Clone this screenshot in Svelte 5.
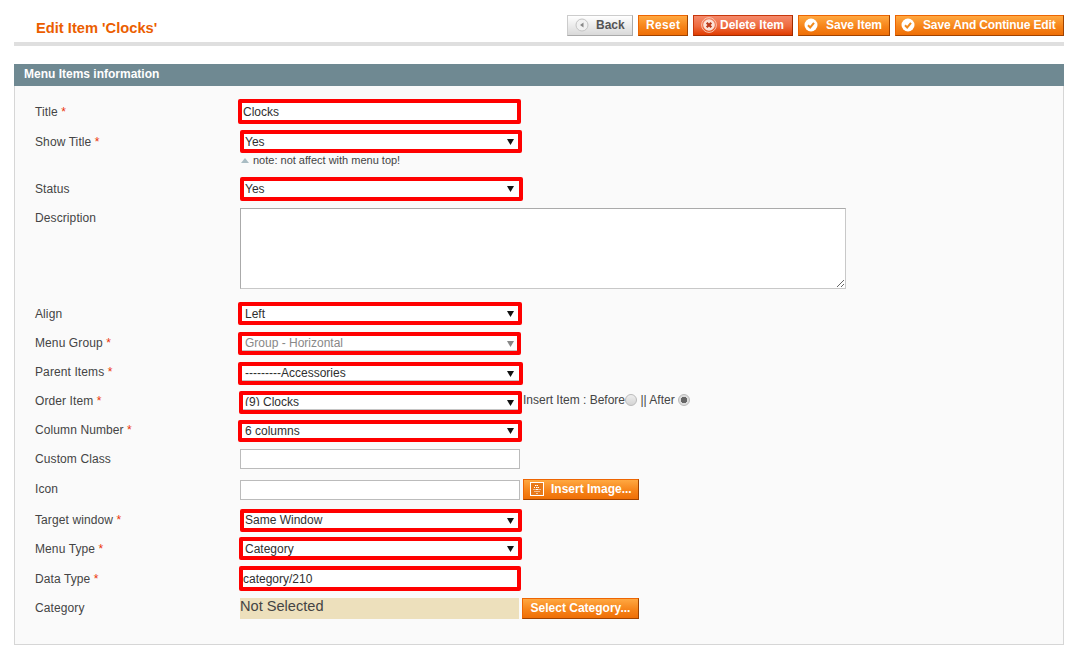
<script>
  // dy = control top relative to the row, dx = control left relative to the column
  // up = extra bottom padding that lifts a select's text off the box centre
  const rows = [
    { label: 'Title', req: true, kind: 'text', value: 'Clocks', h: 30, dy: -2, dx: -2, w: 283, bh: 25 },
    { label: 'Show Title', req: true, kind: 'select', value: 'Yes', note: 'note: not affect with menu top!', h: 47, dy: -1, dx: 0, w: 282, bh: 23 },
    { label: 'Status', kind: 'select', value: 'Yes', h: 29, dy: -1, dx: 0, w: 283, bh: 24 },
    { label: 'Description', kind: 'area', h: 96, dy: 1 },
    { label: 'Align', kind: 'select', value: 'Left', h: 29, dy: -1, dx: -2, w: 284, bh: 23 },
    { label: 'Menu Group', req: true, kind: 'select', value: 'Group - Horizontal', off: true, seam: true, up: 2, h: 29, dy: 0, dx: -2, w: 283, bh: 23 },
    { label: 'Parent Items', req: true, kind: 'select', value: '---------Accessories', seam: true, up: 4, h: 29, dy: 1, dx: -2, w: 285, bh: 23 },
    { label: 'Order Item', req: true, kind: 'select', value: '(9) Clocks', seam: true, up: 4, order: true, h: 29, dy: 1, dx: -1, w: 283, bh: 23 },
    { label: 'Column Number', req: true, kind: 'select', value: '6 columns', up: 2, h: 29, dy: 1, dx: -2, w: 284, bh: 22 },
    { label: 'Custom Class', kind: 'plain', h: 30, dy: 1 },
    { label: 'Icon', kind: 'plain', image: true, h: 31, dy: 2 },
    { label: 'Target window', req: true, kind: 'select', value: 'Same Window', up: 2, h: 29, dy: 0, dx: 0, w: 282, bh: 23 },
    { label: 'Menu Type', req: true, kind: 'select', value: 'Category', h: 30, dy: -1, dx: -1, w: 283, bh: 23 },
    { label: 'Data Type', req: true, kind: 'text', value: 'category/210', h: 29, dy: -2, dx: -1, w: 282, bh: 25 },
    { label: 'Category', kind: 'picker', h: 46, dy: 1 }
  ];
</script>

{#snippet check()}
  <svg class="ico" viewBox="0 0 14 14" width="14" height="14">
    <circle cx="7" cy="7" r="6.5" fill="#fff" />
    <path d="M4 7.2 6.2 9.4 10 4.8" fill="none" stroke="#f18a1c" stroke-width="2" />
  </svg>
{/snippet}

<div class="page">
  <header class="head">
    <h3>Edit Item 'Clocks'</h3>
    <div class="actions">
      <button class="btn back">
        <svg class="ico" viewBox="0 0 14 14" width="14" height="14">
          <circle cx="7" cy="7" r="6" fill="#f1f1f1" stroke="#c4c4c4" />
          <path d="M8.5 4.5v5L5 7z" fill="#888" />
        </svg>
        Back
      </button>
      <button class="btn reset">Reset</button>
      <button class="btn del">
        <svg class="ico" viewBox="0 0 16 16" width="16" height="16">
          <circle cx="8" cy="8" r="7.4" fill="none" stroke="#f9c4ae" />
          <circle cx="8" cy="8" r="5.8" fill="#fbe3d8" />
          <path d="M5.7 5.7 10.3 10.3M10.3 5.7 5.7 10.3" stroke="#b8391a" stroke-width="2.2" />
        </svg>
        Delete Item
      </button>
      <button class="btn save">{@render check()}Save Item</button>
      <button class="btn save long">{@render check()}Save And Continue Edit</button>
    </div>
  </header>

  <h4 class="bar">Menu Items information</h4>

  <form class="panel">
    {#each rows as r}
      <div class="row" style:height="{r.h}px">
        <label for={r.label}>{r.label}{#if r.req}<span class="req">&nbsp;*</span>{/if}</label>
        <div class="ctl" style:margin-top="{r.dy}px">
          {#if r.kind === 'text'}
            <input id={r.label} class="red" style:margin-left="{r.dx}px" style:width="{r.w}px" style:height="{r.bh}px" style:padding-left="{-1 - r.dx}px" value={r.value} />
          {:else if r.kind === 'select'}
            <div class="line">
              <div class="selbox" style:margin-left="{r.dx}px" style:width="{r.w}px" style:height="{r.bh}px">
                <select id={r.label} class="red" class:seam={r.seam} disabled={r.off} style:padding-left="{1 - r.dx}px" style:padding-bottom="{r.up || 0}px">
                  <option>{r.value}</option>
                </select>
                <svg class="arrow" class:off={r.off} style:left="{267 - r.dx}px" viewBox="0 0 7 6" width="7" height="6"><path d="M0 0h7L3.5 6z" /></svg>
              </div>
              {#if r.order}
                <span class="order">Insert Item : Before<input class="radio" type="radio" name="pos" /> || After <input class="radio" type="radio" name="pos" checked /></span>
              {/if}
            </div>
            {#if r.note}<p class="note"><i></i>{r.note}</p>{/if}
          {:else if r.kind === 'area'}
            <textarea id={r.label}></textarea>
          {:else if r.kind === 'plain'}
            <div class="line">
              <input id={r.label} class="plain" />
              {#if r.image}
                <button class="btn insert" type="button">
                  <svg class="ico" viewBox="0 0 14 14" width="14" height="14">
                    <rect x=".5" y=".5" width="13" height="13" fill="#e8791a" stroke="#fff" />
                    <path d="M7 3v9M5 3.5h4M4 5.5h6M3.5 7.5h7M4.5 9.5h5" fill="none" stroke="#fff" stroke-width="1.1" stroke-dasharray="1 1" />
                  </svg>
                  Insert Image...
                </button>
              {/if}
            </div>
          {:else}
            <div class="line">
              <div class="none">Not Selected</div>
              <button class="btn pick" type="button">Select Category...</button>
            </div>
          {/if}
        </div>
      </div>
    {/each}
  </form>
</div>

<style>
  :global(body) {
    background: #fff;
    font: 12px/20px "Liberation Sans", Arial, sans-serif;
    color: #444;
  }
  .page { padding: 0 16px 0 14px; }

  .head {
    display: flex;
    justify-content: space-between;
    height: 42px;
    box-sizing: content-box;
    border-bottom: 4px solid #dfdfdf;
    margin-bottom: 18px;
  }
  h3 {
    margin: 18px 0 0 22px;
    font-size: 14.7px;
    line-height: 20px;
    color: #eb5e00;
  }
  .actions { display: flex; gap: 5px; padding-top: 15px; }

  .btn {
    display: inline-flex;
    align-items: center;
    height: 21px;
    box-sizing: border-box;
    padding: 0 0 1px 5px;
    font: bold 12px "Liberation Sans", Arial, sans-serif;
    white-space: nowrap;
    color: #fff;
    border: 1px solid;
    border-color: #ed6502 #a04300 #a04300 #ed6502;
    background: linear-gradient(#ffa841, #f6841a 55%, #ef6f06);
  }
  .ico { flex: none; }
  .back {
    width: 66px;
    padding-left: 7px;
    color: #555;
    border-color: #ccc #aaa #aaa #ccc;
    background: linear-gradient(#fff, #d9d9d9);
  }
  .back .ico { margin-right: 7px; }
  .reset { width: 50px; padding-left: 7px; letter-spacing: .3px; }
  .del {
    width: 100px;
    padding-left: 7px;
    border-color: #c8370c #a02b00 #a02b00 #c8370c;
    background: linear-gradient(#f58a6b, #ee6a3e 55%, #e03c00);
  }
  .del .ico { margin-right: 3px; }
  .save { width: 92px; }
  .save .ico { margin-right: 8px; }
  .long { width: 169px; letter-spacing: -.14px; }
  .insert { width: 116px; margin: -1px 0 0 3px; padding-left: 6px; }
  .insert .ico { margin-right: 7px; }
  .pick { width: 117px; justify-content: center; margin-left: 3px; padding: 0 0 1px; }

  .bar {
    margin: 0;
    height: 22px;
    padding-left: 10px;
    font-size: 12px;
    line-height: 21px;
    color: #fff;
    background: #6f8992;
  }

  .panel {
    height: 559px;
    box-sizing: border-box;
    padding-top: 15px;
    border: 1px solid #d6d6d6;
    border-top: 0;
    background: #fafafa;
  }
  .row {
    display: grid;
    grid-template-columns: 205px 1fr;
    padding-left: 20px;
  }
  label { margin-top: 1px; font-size: 12px; letter-spacing: .1px; }
  .req { color: #eb340a; }

  .line { display: flex; align-items: flex-start; }

  input, select, textarea {
    display: block;
    box-sizing: border-box;
    margin: 0;
    font: 12px "Liberation Sans", Arial, sans-serif;
    color: #2f2f2f;
    background: #fff;
    outline: none;
  }
  .red {
    padding: 0;
    border: 4px solid #f00;
    border-radius: 2px;
  }
  .selbox { position: relative; flex: none; }
  select.red {
    width: 100%;
    height: 100%;
    appearance: none;
    opacity: 1;
  }
  select.seam { box-shadow: inset 0 -1px 0 #c4c4c4; }
  select:disabled { color: #888; }
  .arrow { position: absolute; top: 50%; margin-top: -3px; fill: #111; }
  .arrow.off { fill: #888; }

  .order { margin: -1px 0 0 1px; line-height: 20px; white-space: nowrap; }
  .radio {
    display: inline-block;
    appearance: none;
    width: 12px;
    height: 12px;
    margin: 0;
    vertical-align: -2px;
    border: 1px solid #bbb;
    border-radius: 50%;
    background: linear-gradient(#eee, #d4d4d4);
  }
  .radio:checked { background: radial-gradient(circle, #666 0 3px, #ddd 3.5px); }

  .note { margin: 0; padding-left: 1px; font-size: 11px; line-height: 14px; }
  .note i {
    display: inline-block;
    margin: 0 4px 1px 0;
    border: 4px solid transparent;
    border-top: 0;
    border-bottom: 5px solid #a9bcc3;
  }

  textarea {
    width: 606px;
    height: 81px;
    border: 1px solid #aaa;
    border-color: #aaa #c8c8c8 #c8c8c8 #aaa;
  }
  .plain {
    width: 280px;
    height: 20px;
    border: 1px solid #bbb;
  }
  .none {
    width: 279px;
    height: 21px;
    font-size: 14.6px;
    line-height: 17px;
    background: #ede0bc;
  }
</style>
